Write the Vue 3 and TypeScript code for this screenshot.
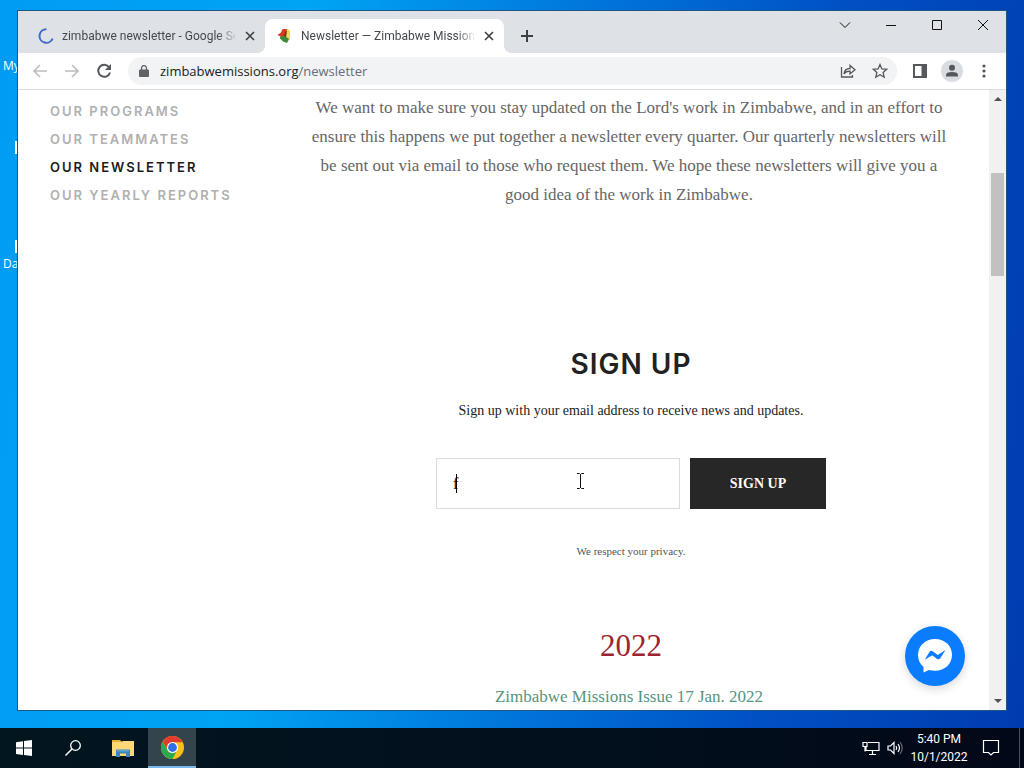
<script setup lang="ts">
import { ref } from 'vue'

interface NavItem {
  label: string
  active?: boolean
}

const navItems: NavItem[] = [
  { label: 'Our Programs' },
  { label: 'Our Teammates' },
  { label: 'Our Newsletter', active: true },
  { label: 'Our Yearly Reports' },
]

const email = ref('f')
</script>

<template>
  <div class="desktop">
    <div class="wallpaper">
      <span class="shortcut shortcut-my">My</span>
      <span class="chip chip-one"></span>
      <span class="chip chip-two"></span>
      <span class="shortcut shortcut-da">Da</span>

      <section class="window">
        <header class="tabstrip">
          <div class="tab">
            <svg class="favicon" viewBox="0 0 16 16"><path d="M8.4 1.2A6.8 6.8 0 1 0 14.6 10.6" fill="none" stroke="#3f68c8" stroke-width="2" /></svg>
            <span class="tab-title">zimbabwe newsletter - Google Se</span>
            <button class="tab-close" aria-label="Close tab">
              <svg viewBox="0 0 10 10"><path d="M1 1l8 8M9 1L1 9" /></svg>
            </button>
          </div>
          <div class="tab tab-active">
            <svg class="favicon" viewBox="0 0 16 16">
              <path d="M5.500 1h5L9.500 6l-4 3.500L.500 7l3.500-2.500z" fill="#d83a1c" />
              <path d="M10 1l3 1.500v9L10 13 8 8z" fill="#e8dc50" />
              <path d="M3 8.500l5-.5 4 3-2 4-4-1.500-3-3z" fill="#3c8c3c" />
              <path d="M9 3h1l-1 6-2.500-1z" fill="#7a2c14" />
            </svg>
            <span class="tab-title">Newsletter — Zimbabwe Mission</span>
            <button class="tab-close" aria-label="Close tab">
              <svg viewBox="0 0 10 10"><path d="M1 1l8 8M9 1L1 9" /></svg>
            </button>
          </div>
          <button class="new-tab" aria-label="New tab">
            <svg viewBox="0 0 12 12"><path d="M6 0v12M0 6h12" /></svg>
          </button>
          <div class="window-controls">
            <button aria-label="Search tabs"><svg viewBox="0 0 12 12"><path d="M1 3.500l5 5 5-5" /></svg></button>
            <button aria-label="Minimize"><svg viewBox="0 0 12 12"><path d="M1 6.500h10" /></svg></button>
            <button aria-label="Maximize"><svg viewBox="0 0 12 12"><path d="M1.500 1.500h9v9h-9z" /></svg></button>
            <button aria-label="Close"><svg viewBox="0 0 12 12"><path d="M1 1l10 10M11 1L1 11" /></svg></button>
          </div>
        </header>

        <div class="toolbar">
          <button class="tool muted" aria-label="Back"><svg viewBox="0 0 16 16"><path d="M15 8H2M8 2L2 8l6 6" /></svg></button>
          <button class="tool muted" aria-label="Forward"><svg viewBox="0 0 16 16"><path d="M1 8h13M8 2l6 6-6 6" /></svg></button>
          <button class="tool reload" aria-label="Reload">
            <svg viewBox="0 0 16 16"><path d="M13.200 4.400A6 6 0 1 0 14 9.400" /><path d="M15 1v6H9z" class="solid" /></svg>
          </button>
          <div class="omnibox">
            <svg class="lock" viewBox="0 0 10 12"><path d="M1 4.500h8q1 0 1 1V11q0 1-1 1H1q-1 0-1-1V5.500q0-1 1-1z" fill="#5f6368" /><path d="M2.600 5V3a2.400 2.400 0 0 1 4.800 0v2" fill="none" stroke="#5f6368" stroke-width="1.300" /></svg>
            <span class="url"><b>zimbabwemissions.org</b>/newsletter</span>
            <button class="tool thin" aria-label="Share"><svg viewBox="0 0 16 16"><path d="M1.500 4v10h11V12M4 11q.500-5.500 6-5.500V2.500l5 4.200-5 4.200V8.200Q6 8 4 11z" /></svg></button>
            <button class="tool thin" aria-label="Bookmark"><svg viewBox="0 0 16 16"><path d="M8 1.500l1.900 4.400 4.800.4-3.600 3.200 1.100 4.700L8 11.700l-4.200 2.500 1.100-4.700-3.600-3.200 4.800-.4z" /></svg></button>
          </div>
          <button class="tool panel" aria-label="Side panel"><svg viewBox="0 0 16 16"><path d="M2 2h12v12H2z" /><path d="M9.500 1.500H15v13H9.500z" class="solid" /></svg></button>
          <button class="tool avatar" aria-label="Profile"><svg viewBox="0 0 16 16"><circle cx="8" cy="4.800" r="3" class="solid" /><path d="M2 13.500V12q0-3 6-3t6 3v1.500z" class="solid" /></svg></button>
          <button class="tool" aria-label="Menu"><svg viewBox="0 0 16 16"><circle cx="8" cy="3" r="1.600" class="solid" /><circle cx="8" cy="8" r="1.600" class="solid" /><circle cx="8" cy="13" r="1.600" class="solid" /></svg></button>
        </div>

        <div class="viewport">
          <div class="page">
            <nav class="side-nav">
              <a v-for="item in navItems" :key="item.label" href="#" :class="{ active: item.active }">{{ item.label }}</a>
            </nav>
            <main class="content">
              <p class="intro">
                We want to make sure you stay updated on the Lord's work in Zimbabwe, and in an effort to<br />
                ensure this happens we put together a newsletter every quarter. Our quarterly newsletters will<br />
                be sent out via email to those who request them. We hope these newsletters will give you a<br />
                good idea of the work in Zimbabwe.
              </p>
              <form class="signup" @submit.prevent>
                <h2>SIGN UP</h2>
                <p class="hint">Sign up with your email address to receive news and updates.</p>
                <div class="fields">
                  <div class="field">
                    <input v-model="email" type="text" aria-label="Email Address" />
                    <span class="caret"></span>
                    <svg class="ibeam" viewBox="0 0 9 16"><path d="M1 .500h2.500l1 1 1-1H8M4.500 1v14M1 15.500h2.500l1-1 1 1H8" /></svg>
                  </div>
                  <button type="submit">SIGN UP</button>
                </div>
                <p class="privacy">We respect your privacy.</p>
              </form>
              <h3>2022</h3>
              <a class="issue" href="#">Zimbabwe Missions Issue 17 Jan. 2022</a>
            </main>
          </div>
          <div class="scrollbar">
            <svg viewBox="0 0 8 4"><path d="M0 4l4-4 4 4z" /></svg>
            <div class="track"><div class="thumb"></div></div>
            <svg viewBox="0 0 8 4"><path d="M0 0l4 4 4-4z" /></svg>
          </div>
          <button class="messenger" aria-label="Messenger">
            <svg viewBox="0 0 36 36">
              <path d="M18 1C8 1 1 8 1 17c0 5 2 9 5.500 12v5.500l5.500-2.500c2 .6 4 .8 6 .8 10 0 17-7 17-16S28 1 18 1z" fill="#fff" />
              <path d="M7.500 22l5-8q1.500-2 3.500-.5l4 3q.7.5 1.500 0L28.500 12l-5.200 8.200q-1.500 2-3.500.5l-4-3q-.7-.5-1.500 0z" fill="#0a7cff" />
            </svg>
          </button>
        </div>
      </section>
    </div>

    <footer class="taskbar">
      <button class="task" aria-label="Start"><svg class="start" viewBox="0 0 16 16"><path d="M0 2.200l7-1v6.400H0zM8 1l8-1v7.600H8zM0 8.600h7V15l-7-1zM8 8.600h8V16l-8-1z" fill="#fff" /></svg></button>
      <button class="task" aria-label="Search"><svg class="search" viewBox="0 0 16 16"><circle cx="10.500" cy="5.500" r="4.800" fill="none" stroke="#fff" stroke-width="1.300" /><path d="M7 9L.500 15.500" stroke="#fff" stroke-width="1.400" /></svg></button>
      <button class="task" aria-label="File Explorer">
        <svg class="folder" viewBox="0 0 22 19"><path d="M0 1h8l2 2h11v14H0z" fill="#e8b030" /><path d="M0 3h9l2-1h11v15H0z" fill="#fcd878" /><path d="M4 10.500h14V18h-4v-3.500H8V18H4z" fill="#3c88bc" /><path d="M5 11h12v1.500H5z" fill="#60a4d0" /></svg>
      </button>
      <button class="task task-active" aria-label="Google Chrome">
        <svg class="chrome" viewBox="0 0 24 24">
          <circle cx="12" cy="12" r="12" fill="#fbc116" />
          <path d="M1.600 6A12 12 0 0 1 22.600 6.500H12L7.200 14.700z" fill="#e33b2e" />
          <path d="M1.600 6L7.200 15l9.600-.2L12 24A12 12 0 0 1 1.600 6z" fill="#2da94f" />
          <circle cx="12" cy="12" r="5.800" fill="#fff" /><circle cx="12" cy="12" r="4.600" fill="#2f6fe4" />
        </svg>
      </button>
      <div class="tray">
        <svg class="network" viewBox="0 0 18 14"><path d="M6 1.500h11v8H4V6M10.500 10v3M7 13.500h7M1 1.500h4v4H1zM3 5.500v5" /></svg>
        <svg class="volume" viewBox="0 0 16 14"><path d="M1 5h2.500L7 1.500v11L3.500 9H1zM9 5q1.500 2 0 4M11 3q3 4 0 8" /><path d="M13 1q4.500 6 0 12" opacity="0.400" /></svg>
        <div class="clock"><span>5:40 PM</span><span>10/1/2022</span></div>
        <svg class="action" viewBox="0 0 18 18"><path d="M1.500 1.500h15v12h-5L9 16l-2.500-2.500h-5z" /></svg>
      </div>
      <span class="show-desktop"></span>
    </footer>
  </div>
</template>

<style>
body {
  margin: 0;
  overflow: hidden;
}
</style>

<style scoped>
.desktop {
  display: flex;
  flex-direction: column;
  height: 100vh;
  font-family: "Open Sans", "Noto Sans", sans-serif;
  font-size: 12px;
}
button {
  border: 0;
  padding: 0;
  background: none;
  display: flex;
  align-items: center;
  justify-content: center;
  font: inherit;
}
a {
  text-decoration: none;
}
svg {
  display: block;
  flex: none;
}
.wallpaper {
  position: relative;
  flex: 1;
  min-height: 0;
  display: flex;
  padding: 10px 17px 17px;
  background: linear-gradient(97deg, #009cf4 0%, #00a4f4 28%, #0078dc 52%, #0050c4 76%, #003cb0 100%);
}
.shortcut {
  position: absolute;
  left: 3px;
  color: #fff;
  line-height: 16px;
}
.shortcut-my { top: 58px; }
.shortcut-da { top: 256px; }
.chip {
  position: absolute;
  left: 15px;
  width: 4px;
  height: 13px;
  background: #fff;
}
.chip-one { top: 141px; }
.chip-two { top: 240px; }

.window {
  position: relative;
  flex: 1;
  display: flex;
  flex-direction: column;
  min-width: 0;
  border: 1px solid #1c5684;
  background: #fff;
}
.tabstrip {
  display: flex;
  height: 42px;
  background: #dee1e6;
  align-items: flex-end;
  padding-left: 8px;
}
.tab {
  box-sizing: border-box;
  width: 239px;
  height: 34px;
  display: flex;
  align-items: center;
  padding: 0 8px 0 12px;
  gap: 8px;
  font-family: Roboto, sans-serif;
  color: #45494d;
}
.tab-active {
  position: relative;
  background: #fff;
  border-radius: 8px 8px 0 0;
}
.tab-active::before,
.tab-active::after {
  content: "";
  position: absolute;
  bottom: 0;
  width: 8px;
  height: 8px;
}
.tab-active::before {
  left: -8px;
  background: radial-gradient(circle at 0 0, transparent 8px, #fff 8px);
}
.tab-active::after {
  right: -8px;
  background: radial-gradient(circle at 100% 0, transparent 8px, #fff 8px);
}
.favicon {
  width: 16px;
  height: 16px;
}
.tab-title {
  flex: 1;
  min-width: 0;
  white-space: nowrap;
  line-height: 18px;
  mask-image: linear-gradient(90deg, #000 90%, rgba(0, 0, 0, 0.1));
}
.tab-close {
  width: 14px;
  height: 14px;
}
.tab-close svg {
  width: 10px;
  height: 10px;
}
.tab-close path,
.new-tab path {
  stroke: #3c4043;
  stroke-width: 2;
}
.tab-close path { stroke-width: 1.6; }
.new-tab {
  width: 28px;
  height: 34px;
  margin-left: 9px;
}
.new-tab svg {
  width: 12px;
  height: 12px;
}
.window-controls {
  display: flex;
  align-self: flex-start;
  margin-left: auto;
}
.window-controls button {
  width: 46px;
  height: 28px;
}
.window-controls svg {
  width: 12px;
  height: 12px;
}
.window-controls path {
  fill: none;
  stroke: #111;
  stroke-width: 1;
}

.toolbar {
  display: flex;
  align-items: center;
  height: 36px;
  padding: 0 10px;
  gap: 8px;
  border-bottom: 1px solid #dadce0;
}
.tool {
  width: 24px;
  height: 24px;
}
.tool svg {
  width: 16px;
  height: 16px;
}
.tool path {
  fill: none;
  stroke: #54585c;
  stroke-width: 2;
}
.tool .solid {
  fill: #54585c;
  stroke: none;
}
.muted path {
  stroke: #babcbe;
  stroke-width: 1.6;
}
.thin path { stroke-width: 1.3; }
.omnibox {
  flex: 1;
  display: flex;
  align-items: center;
  height: 28px;
  margin-left: 4px;
  padding: 0 5px 0 11px;
  gap: 8px;
  border-radius: 14px;
  background: #f1f3f4;
}
.lock {
  width: 10px;
  height: 12px;
}
.url {
  flex: 1;
  padding-left: 3px;
  font-size: 13px;
  color: #6a6e72;
}
.url b {
  font-weight: 400;
  color: #202124;
}
.panel { margin-left: 3px; }
.avatar {
  box-sizing: border-box;
  border: 1px solid #fff;
  border-radius: 50%;
  background: #dadce4;
}

.viewport {
  position: relative;
  flex: 1;
  min-height: 0;
  display: flex;
}
.page {
  flex: 1;
  min-width: 0;
  display: flex;
  overflow: hidden;
}
.side-nav {
  display: flex;
  flex-direction: column;
  width: 220px;
  padding: 7px 0 0 32px;
}
.side-nav a {
  font-family: Inter, Lato, sans-serif;
  font-size: 13px;
  font-weight: 600;
  line-height: 28px;
  letter-spacing: 2px;
  text-transform: uppercase;
  white-space: nowrap;
  color: #b0b0b0;
}
.side-nav a.active { color: #1c1c1c; }
.content {
  flex: 1;
  min-width: 0;
  display: flex;
  flex-direction: column;
  align-items: center;
  padding: 3px 1px 0 0;
  font-family: "Liberation Serif", serif;
  text-align: center;
  white-space: nowrap;
}
.intro {
  margin: 0;
  font-size: 17px;
  line-height: 29px;
  color: #666;
}
.signup {
  display: flex;
  flex-direction: column;
  align-items: center;
  margin-top: 136px;
  padding-left: 4px;
}
h2 {
  margin: 0;
  font-family: Inter, Lato, sans-serif;
  font-size: 28px;
  font-weight: 600;
  line-height: 38px;
  letter-spacing: 1px;
  color: #222;
}
.hint {
  margin: 16px 0 0;
  font-size: 14px;
  line-height: 24px;
  color: #222;
}
.fields {
  display: flex;
  gap: 10px;
  margin-top: 35px;
}
.field {
  position: relative;
  display: flex;
}
.field input {
  box-sizing: border-box;
  width: 244px;
  height: 51px;
  padding: 0 16px;
  border: 1px solid #dcdcdc;
  background: #fff;
  font: 16px "Liberation Serif", serif;
  color: #222;
  outline: none;
}
.caret {
  position: absolute;
  left: 20px;
  top: 16px;
  width: 1px;
  height: 19px;
  background: #000;
}
.ibeam {
  position: absolute;
  left: 140px;
  top: 15px;
  width: 9px;
  height: 16px;
}
.ibeam path {
  fill: none;
  stroke: #111;
}
.fields button {
  width: 136px;
  height: 51px;
  background: #272727;
  color: #fff;
  font-size: 14px;
  font-weight: 700;
}
.privacy {
  margin: 32px 0 0;
  font-size: 11px;
  line-height: 20px;
  color: #555;
}
h3 {
  margin: 65px 0 0;
  padding-left: 4px;
  font-size: 31px;
  font-weight: 400;
  line-height: 40px;
  color: #9c2430;
}
.issue {
  margin-top: 16px;
  font-size: 17px;
  line-height: 29px;
  color: #559480;
}
.scrollbar {
  display: flex;
  flex-direction: column;
  align-items: center;
  width: 17px;
  padding: 7px 0;
  box-sizing: border-box;
  background: #f1f1f1;
}
.scrollbar svg {
  width: 8px;
  height: 4px;
}
.scrollbar path { fill: #505050; }
.track {
  flex: 1;
  width: 13px;
  padding-top: 72px;
}
.thumb {
  height: 103px;
  background: #c1c1c1;
}
.messenger {
  position: absolute;
  right: 41px;
  bottom: 24px;
  width: 60px;
  height: 60px;
  border-radius: 50%;
  background: #0a7cff;
  box-shadow: 0 3px 10px rgba(0, 0, 0, 0.16);
}
.messenger svg {
  width: 36px;
  height: 36px;
}

.taskbar {
  display: flex;
  height: 40px;
  background: linear-gradient(90deg, #021620, #020f1c 60%, #020818);
  color: #fff;
}
.task {
  box-sizing: border-box;
  width: 50px;
  height: 40px;
}
.task:first-child { width: 48px; }
.task-active {
  width: 48px;
  border-bottom: 2px solid #78b8ec;
  background: #33444d;
}
.start, .search {
  width: 16px;
  height: 16px;
}
.folder {
  width: 22px;
  height: 19px;
}
.chrome {
  width: 23px;
  height: 23px;
}
.tray {
  display: flex;
  align-items: center;
  gap: 7px;
  margin-left: auto;
  padding-right: 19px;
}
.tray path {
  fill: none;
  stroke: #fff;
  stroke-width: 1.2;
}
.network {
  width: 18px;
  height: 14px;
}
.volume {
  width: 16px;
  height: 14px;
}
.action {
  width: 18px;
  height: 18px;
}
.clock {
  display: flex;
  flex-direction: column;
  align-items: center;
  width: 58px;
  margin-right: 7px;
  font-family: Roboto, sans-serif;
  line-height: 18px;
  white-space: nowrap;
}
.show-desktop {
  width: 4px;
  border-left: 1px solid #4a5260;
}
</style>
